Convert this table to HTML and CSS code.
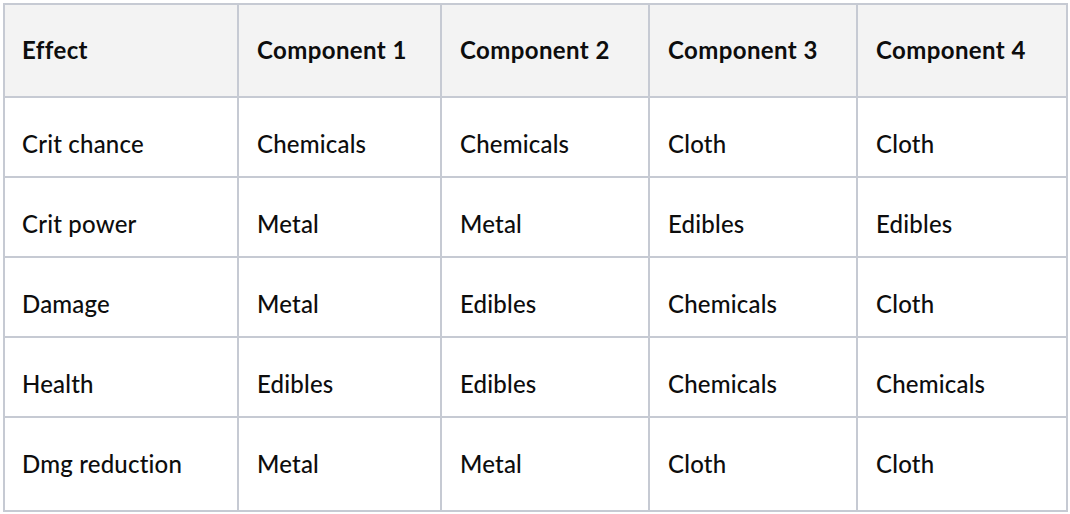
FILE: index.html
```html
<!DOCTYPE html>
<html lang="en">
<head>
<meta charset="utf-8">
<title>Effects</title>
<link rel="stylesheet" href="styles.css">
</head>
<body>
<div class="table">
  <div class="cell head first">Effect</div>
  <div class="cell head">Component 1</div>
  <div class="cell head">Component 2</div>
  <div class="cell head">Component 3</div>
  <div class="cell head">Component 4</div>

  <div class="cell body first">Crit chance</div>
  <div class="cell body">Chemicals</div>
  <div class="cell body">Chemicals</div>
  <div class="cell body">Cloth</div>
  <div class="cell body">Cloth</div>

  <div class="cell body first">Crit power</div>
  <div class="cell body">Metal</div>
  <div class="cell body">Metal</div>
  <div class="cell body">Edibles</div>
  <div class="cell body">Edibles</div>

  <div class="cell body first">Damage</div>
  <div class="cell body">Metal</div>
  <div class="cell body">Edibles</div>
  <div class="cell body">Chemicals</div>
  <div class="cell body">Cloth</div>

  <div class="cell body first">Health</div>
  <div class="cell body">Edibles</div>
  <div class="cell body">Edibles</div>
  <div class="cell body">Chemicals</div>
  <div class="cell body">Chemicals</div>

  <div class="cell last first">Dmg reduction</div>
  <div class="cell last">Metal</div>
  <div class="cell last">Metal</div>
  <div class="cell last">Cloth</div>
  <div class="cell last">Cloth</div>
</div>
</body>
</html>
```

FILE: styles.css
```css
html, body {
  margin: 0;
  padding: 0;
  background: #ffffff;
}

body {
  padding: 3px;
  font-family: "Lato", "Noto Sans", sans-serif;
  color: #0d0d0d;
}

.table {
  display: grid;
  grid-template-columns: 232px 201px 206px 206px 208px;
  grid-template-rows: 91px 78px 78px 78px 78px 92px;
  gap: 2px;
  padding: 2px;
  width: 1065px;
  box-sizing: border-box;
  background: #c6cad3;
}

.cell {
  display: flex;
  align-items: center;
  background: #ffffff;
  padding: 0 10px 2px 18px;
  font-size: 24px;
  font-weight: 500;
  letter-spacing: 0.2px;
  white-space: nowrap;
}

.cell.first {
  padding-left: 17px;
}

.head {
  background: #f3f3f3;
  font-weight: 700;
  letter-spacing: 0.4px;
}

.body {
  padding-top: 12px;
  padding-bottom: 0;
}
```
